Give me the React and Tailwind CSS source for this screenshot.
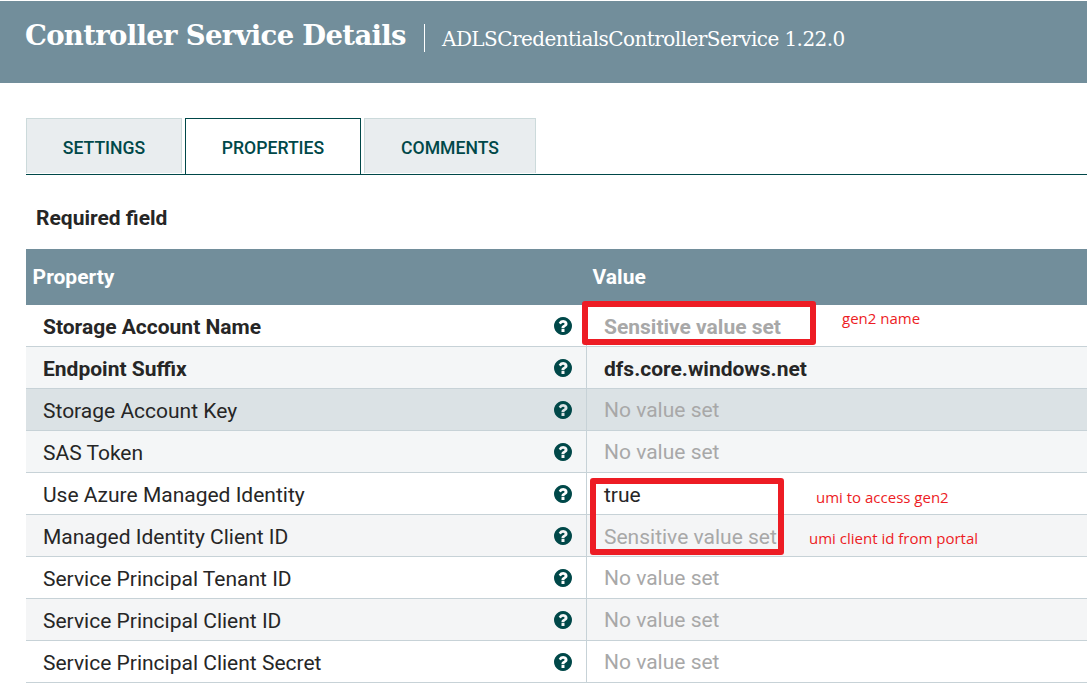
const rows = [
  { name: "Storage Account Name", value: "Sensitive value set", required: true, muted: true, bg: "bg-white" },
  { name: "Endpoint Suffix", value: "dfs.core.windows.net", required: true, bg: "bg-[#f4f6f7]" },
  { name: "Storage Account Key", bg: "bg-[#dbe2e5]" },
  { name: "SAS Token", bg: "bg-[#f4f6f7]" },
  { name: "Use Azure Managed Identity", value: "true", bg: "bg-white" },
  { name: "Managed Identity Client ID", value: "Sensitive value set", muted: true, bg: "bg-[#f4f5f6]" },
  { name: "Service Principal Tenant ID", bg: "bg-white" },
  { name: "Service Principal Client ID", bg: "bg-[#f4f5f6]" },
  { name: "Service Principal Client Secret", bg: "bg-white" },
];

function HelpIcon() {
  return (
    <svg viewBox="128 128 1536 1536" className="h-[18px] w-[18px] shrink-0 fill-[#004849]" aria-hidden="true">
      <path d="M1024 1376v-192q0-14-9-23t-23-9h-192q-14 0-23 9t-9 23v192q0 14 9 23t23 9h192q14 0 23-9t9-23zm256-672q0-88-55.5-163t-138.5-116-170-41q-243 0-371 213-15 24 8 42l132 100q7 6 19 6 16 0 25-12 53-68 86-92 34-24 86-24 48 0 85.5 26t37.5 59q0 38-20 61t-68 45q-63 28-115.5 86.5t-52.5 125.5v36q0 14 9 23t23 9h192q14 0 23-9t9-23q0-19 21.5-49.5t54.5-49.5q32-18 49-28.5t46-35 44.5-48 28-60.5 12.5-81zm384 192q0 209-103 385.5t-279.5 279.5-385.5 103-385.5-103-279.5-279.5-103-385.5 103-385.5 279.5-279.5 385.5-103 385.5 103 279.5 279.5 103 385.5z" />
    </svg>
  );
}

function Header() {
  return (
    <header className="mt-px flex h-[82px] items-start bg-[#728e9b] pl-[25px] font-['Roboto_Slab','DejaVu_Serif',serif] whitespace-nowrap text-white">
      <h1 className="mt-[14px] w-[399px] text-[27.5px] leading-10 font-bold tracking-[-0.68px]">
        Controller Service Details
      </h1>
      <div className="mt-[23px] h-7 w-px bg-white" />
      <p className="mt-[22px] ml-[17px] text-[20px] leading-8 tracking-[-0.56px]">
        ADLSCredentialsControllerService 1.22.0
      </p>
    </header>
  );
}

function Tabs() {
  const idle = "mb-px border-[#ccdadb] bg-[#e9edef]";
  const active = "border-[#004849] bg-white";
  return (
    <nav className="mt-[35px] flex h-[57px] gap-[3px] border-b border-[#004849] text-[17.6px] font-medium text-[#004849]">
      <div className={`flex w-[156px] items-center justify-center border border-b-0 pt-1 ${idle}`}>SETTINGS</div>
      <div className={`flex w-[176px] items-center justify-center border border-b-0 pt-[3px] ${active}`}>PROPERTIES</div>
      <div className={`flex w-[172px] items-center justify-center border border-b-0 pt-1 ${idle}`}>COMMENTS</div>
    </nav>
  );
}

function Row({ name, value, required, muted, bg }) {
  return (
    <div className={`flex h-[42px] border-b border-[#c7d2d7] ${bg} ${required ? "font-bold" : ""}`}>
      <div className="flex w-[561px] items-center justify-between border-r border-[#c7d2d7] pr-[14px] pl-[17px]">
        <span className="pt-[3px]">{name}</span>
        <HelpIcon />
      </div>
      {value ? (
        <div className={`flex items-center pt-[3px] pl-[17px] ${muted ? "text-[#a8a8a8]" : ""}`}>{value}</div>
      ) : (
        <div className="flex items-center pt-px pl-[17px] text-[#a8a8a8]">No value set</div>
      )}
    </div>
  );
}

const note = "absolute text-[15px] leading-5 text-[#ed1c24] font-['Open_Sans',sans-serif]";

export default function App() {
  return (
    <div className="relative h-[688px] w-full overflow-hidden bg-white pt-px font-[Roboto,sans-serif] text-[21px] leading-6 whitespace-nowrap text-[#262626]">
      <div className="-mt-px">
        <Header />
      </div>
      <main className="pl-[26px]">
        <Tabs />
        <div className="mt-[31px] ml-[10px] font-bold">Required field</div>
        <div className="mt-[19px] flex h-14 items-center bg-[#728e9b] font-bold text-white">
          <div className="w-[560px] pl-[6.6px]">Property</div>
          <div className="pl-[6.6px]">Value</div>
        </div>
        {rows.map((row) => (
          <Row key={row.name} {...row} />
        ))}
      </main>

      <div className="absolute top-[301px] left-[582px] h-[44px] w-[234px] rounded-[3px] border-[6px] border-[#ed1c24]" />
      <div className="absolute top-[478px] left-[590px] h-[77px] w-[194px] rounded-[3px] border-[6px] border-[#ed1c24]" />
      <div className={`${note} top-[308px] left-[842px]`}>gen2 name</div>
      <div className={`${note} top-[487px] left-[816px]`}>umi to access gen2</div>
      <div className={`${note} top-[528px] left-[809px]`}>umi client id from portal</div>
    </div>
  );
}
